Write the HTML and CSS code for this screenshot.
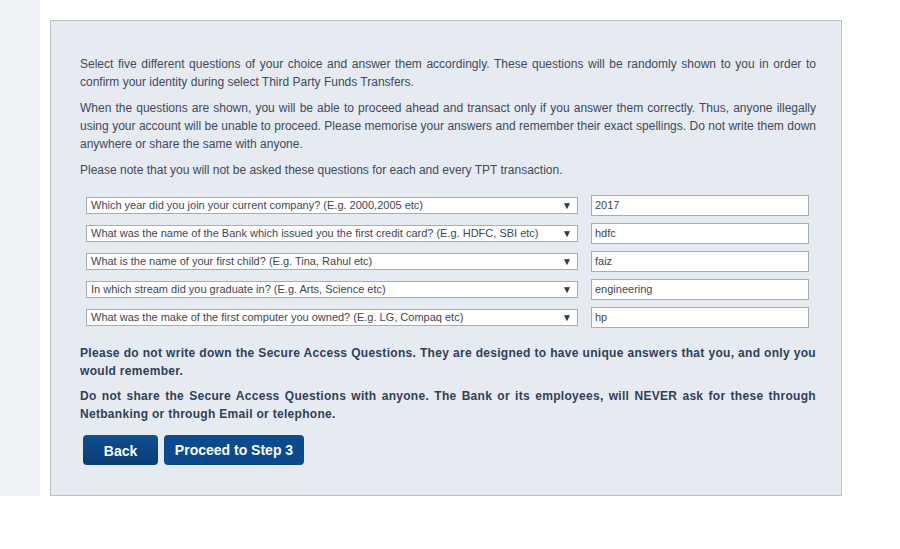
FILE: index.html
```html
<!DOCTYPE html>
<html>
<head>
<meta charset="utf-8">
<link rel="stylesheet" href="styles.css">
</head>
<body>
<div class="page">
  <div class="side"></div>
  <div class="panel">
    <p class="txt">Select five different questions of your choice and answer them accordingly. These questions will be randomly shown to you in order to confirm your identity during select Third Party Funds Transfers.</p>
    <p class="txt">When the questions are shown, you will be able to proceed ahead and transact only if you answer them correctly. Thus, anyone illegally using your account will be unable to proceed. Please memorise your answers and remember their exact spellings. Do not write them down anywhere or share the same with anyone.</p>
    <p class="txt">Please note that you will not be asked these questions for each and every TPT transaction.</p>
    <div class="qa">
      <div class="row">
        <div class="sel"><span class="q">Which year did you join your current company? (E.g. 2000,2005 etc)</span><span class="arr">▼</span></div>
        <div class="ans">2017</div>
      </div>
      <div class="row">
        <div class="sel"><span class="q">What was the name of the Bank which issued you the first credit card? (E.g. HDFC, SBI etc)</span><span class="arr">▼</span></div>
        <div class="ans">hdfc</div>
      </div>
      <div class="row">
        <div class="sel"><span class="q">What is the name of your first child? (E.g. Tina, Rahul etc)</span><span class="arr">▼</span></div>
        <div class="ans">faiz</div>
      </div>
      <div class="row">
        <div class="sel"><span class="q">In which stream did you graduate in? (E.g. Arts, Science etc)</span><span class="arr">▼</span></div>
        <div class="ans">engineering</div>
      </div>
      <div class="row">
        <div class="sel"><span class="q">What was the make of the first computer you owned? (E.g. LG, Compaq etc)</span><span class="arr">▼</span></div>
        <div class="ans">hp</div>
      </div>
    </div>
    <p class="bold">Please do not write down the Secure Access Questions. They are designed to have unique answers that you, and only you would remember.</p>
    <p class="bold">Do not share the Secure Access Questions with anyone. The Bank or its employees, will NEVER ask for these through Netbanking or through Email or telephone.</p>
    <div class="btns">
      <button class="btn back">Back</button>
      <button class="btn proceed">Proceed to Step 3</button>
    </div>
  </div>
</div>
</body>
</html>
```

FILE: styles.css
```css
* { box-sizing: border-box; }
html, body { margin: 0; padding: 0; background: #ffffff; }
body { font-family: "Liberation Sans", Arial, sans-serif; }
.page { display: flex; align-items: flex-start; }
.side { width: 40px; height: 496px; background: #eff3f8; flex: none; }
.panel {
  margin-left: 10px;
  margin-top: 20px;
  width: 792px;
  height: 476px;
  background: #e6ebf2;
  border: 1px solid #bdc1c7;
  padding: 34px 25px 0 29px;
}
.txt {
  margin: 0 0 8px 0;
  font-size: 12px;
  line-height: 18px;
  color: #3d4a5b;
  text-align: justify;
}
.qa { margin-top: 12px; padding-left: 6px; }
.row { display: flex; align-items: center; height: 28px; }
.sel {
  position: relative;
  width: 492px;
  height: 17px;
  background: #fff;
  border: 1px solid #a8adb4;
  font-size: 11px;
  line-height: 15px;
  color: #3c4756;
  padding-left: 4px;
}
.arr {
  position: absolute;
  right: 5px;
  top: 0;
  font-size: 10px;
  line-height: 15px;
  color: #2f3a48;
}
.ans {
  margin-left: 13px;
  width: 218px;
  height: 21px;
  background: #fff;
  border: 1px solid #a8adb4;
  font-size: 11px;
  line-height: 19px;
  color: #3c4756;
  padding-left: 3px;
}
.bold {
  margin: 0 0 7px 0;
  font-size: 12px;
  font-weight: bold;
  line-height: 18px;
  color: #2e3f57;
  text-align: justify;
  letter-spacing: 0.3px;
}
.qa + .bold { margin-top: 13px; }
.btns { display: flex; gap: 6px; margin-top: 12px; padding-left: 3px; }
.btn {
  height: 30px;
  border: none;
  border-radius: 4px;
  color: #fff;
  font-family: "Liberation Sans", Arial, sans-serif;
  font-size: 14px;
  font-weight: bold;
  padding: 0;
}
.back { width: 75px; background: linear-gradient(#0f4f92, #083b75); padding-top: 1px; }
.proceed { width: 140px; background: #0c4a8f; padding-bottom: 1px; }
```
